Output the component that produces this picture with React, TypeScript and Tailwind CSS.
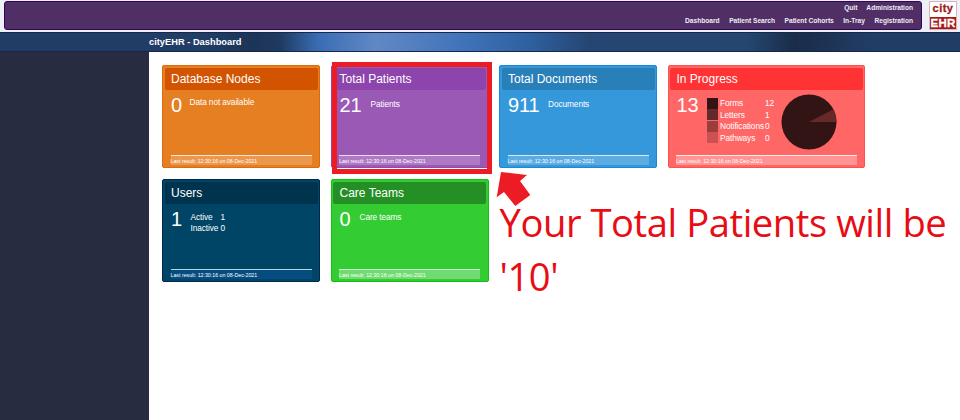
import React from "react";

type CardProps = {
  title: string;
  count: string;
  card: string;
  head: string;
  foot?: string;
  gap: string;
  children: React.ReactNode;
};

function Card({ title, count, card, head, foot = "bg-white/20 border-white/75", gap, children }: CardProps) {
  return (
    <section className={`flex h-[103px] flex-col rounded-[2px] border pt-[1.5px] px-[1.5px] text-white ${card}`}>
      <h2 className={`h-[22.5px] shrink-0 rounded-[2px] pl-[6.5px] text-[12px] leading-[22.5px] whitespace-nowrap ${head}`}>{title}</h2>
      <div className={`flex flex-1 items-start pl-[6.5px] ${gap}`}>
        <span className="mt-[2.5px] text-[20px] leading-[24px] tracking-[-0.1px]">{count}</span>
        {children}
      </div>
      <footer className={`mb-[2px] ml-[6px] mr-[6px] h-[10.5px] border-t pt-px text-[5.25px] leading-[8.5px] whitespace-nowrap ${foot}`}>
        Last result: 12:30:16 on 08-Dec-2021
      </footer>
    </section>
  );
}

function Label({ children }: { children: React.ReactNode }) {
  return <span className="mt-[6px] text-[8.3px] leading-[12px] tracking-[-0.1px] whitespace-nowrap">{children}</span>;
}

const progress = [
  ["Forms", "12", "bg-[#331414]"],
  ["Letters", "1", "bg-[#662929]"],
  ["Notifications", "0", "bg-[#993d3d]"],
  ["Pathways", "0", "bg-[#cc5252]"],
];

export default function App() {
  return (
    <div className="relative flex h-[420px] w-[960px] flex-col overflow-hidden bg-white font-['Liberation_Sans',Arial,sans-serif]">
      <header className="flex h-[32px] shrink-0 bg-[#edf0f7] pl-[4px] pt-[1px]">
        <nav className="flex h-[28.5px] w-[918px] flex-col items-end rounded-[3px] border border-[#35045a] bg-[#502e66] pr-[8px] text-[6.62px] font-bold leading-[13px] text-[#f0edf2]">
          <div className="-mt-px flex gap-[9px]"><a>Quit</a><a>Administration</a></div>
          <div className="flex gap-[9.5px]"><a>Dashboard</a><a>Patient Search</a><a>Patient Cohorts</a><a>In-Tray</a><a>Registration</a></div>
        </nav>
        <div className="ml-[7px] flex h-[29px] w-[28px] flex-col overflow-hidden border border-[#d8b4b8] bg-white text-center font-bold">
          <span className="h-[16px] text-[11px] leading-[13px] tracking-[0.5px] text-[#a01818] [-webkit-text-stroke:0.3px_#a01818]">city</span>
          <span className="h-[12px] bg-[#a81818] text-[11.5px] leading-[12px] tracking-[0.3px] text-white [-webkit-text-stroke:0.3px_#ffffff]">EHR</span>
        </div>
      </header>
      <div className="h-[20px] shrink-0 border-y border-y-[#14284e] bg-[linear-gradient(90deg,#213d65_0,#213d65_205px,#1c3456_255px,#1f3a60_280px,#3a6cb4_318px,#6088c4_375px,#5580c0_410px,#3f72b8_466px,#2f609f_530px,#254672_588px,#24466f_748px,#1a2c48_796px,#213d65_869px)] pl-[149px] text-[9.3px] font-bold leading-[18px] text-white">
        cityEHR - Dashboard
      </div>
      <div className="flex flex-1">
        <aside className="w-[149px] bg-[#282c40]" />
        <main className="grid flex-1 grid-cols-[158px_158px_158px_197.5px] content-start gap-x-[10.5px] gap-y-[11px] pl-[13px] pt-[13px]">
          <Card title="Database Nodes" count="0" card="bg-[#e67e22] border-[#dc6b0c]" head="bg-[#d35400]" gap="gap-[7.5px]">
            <Label>Data not available</Label>
          </Card>
          <Card title="Total Patients" count="21" card="bg-[#9b59b6] border-[#9148b0]" head="bg-[#8e44ad]" gap="gap-[9px]">
            <Label><span className="relative top-[1.5px]">Patients</span></Label>
          </Card>
          <Card title="Total Documents" count="911" card="bg-[#3498db] border-[#168ad8]" head="bg-[#2980b9]" gap="gap-[8.5px]">
            <Label><span className="relative top-[1.5px]">Documents</span></Label>
          </Card>
          <Card title="In Progress" count="13" card="bg-[#ff6666] border-[#ff5050]" head="bg-[#ff3333]" foot="bg-white/30 border-white/80" gap="gap-[8.5px]">
            <div className="mt-[7.5px] w-[72px] text-[8.3px] tracking-[-0.1px]">
              {progress.map(([name, value, color]) => (
                <div key={name} className="flex h-[11.5px] items-center leading-[11.5px]">
                  <i className={`h-[11px] w-[11px] shrink-0 ${color}`} />
                  <span className="w-[47px] shrink-0 pl-[2px] pt-px whitespace-nowrap">{name}</span>
                  <span className="pt-px">{value}</span>
                </div>
              ))}
            </div>
            <svg className="-ml-[7px] mt-[4px]" width="56" height="56" viewBox="0 0 56 56">
              <circle cx="28" cy="28" r="27.5" fill="#331414" />
              <path d="M28 28 L52.4 15.3 A27.5 27.5 0 0 1 55.5 28Z" fill="#662929" />
            </svg>
          </Card>
          <Card title="Users" count="1" card="bg-[#004466] border-[#002850]" head="bg-[#00334d]" foot="bg-[#07508c]/70 border-white/75" gap="gap-[8.5px]">
            <div className="mt-[7.5px] text-[8.3px] leading-[11.5px] tracking-[-0.1px]">
              <div className="flex"><span className="w-[30px]">Active</span><span>1</span></div>
              <div className="flex"><span className="w-[30px] whitespace-nowrap">Inactive</span><span>0</span></div>
            </div>
          </Card>
          <Card title="Care Teams" count="0" card="bg-[#33cc33] border-[#14c014]" head="bg-[#248f24]" foot="bg-white/30 border-white/75" gap="gap-[9px]">
            <Label><span className="relative top-[1px]">Care teams</span></Label>
          </Card>
        </main>
      </div>
      <div className="absolute left-[332px] top-[62px] h-[112px] w-[160px] border-[5px] border-[#ed1c24]" />
      <svg className="absolute left-[490px] top-[165px]" width="50" height="45" viewBox="490 165 50 45">
        <path d="M501 172L527 175L520 181L530.3 195L515.3 206L504 192L496.7 197.3Z" fill="#ed1c24" />
      </svg>
      <p className="absolute left-[499.5px] top-[195px] w-[460px] font-['Open_Sans','Noto_Sans',sans-serif] text-[38.2px] tracking-[-0.45px] leading-[54px] text-[#e80c14] whitespace-nowrap">
        Your Total Patients will be<br />'10'
      </p>
    </div>
  );
}
